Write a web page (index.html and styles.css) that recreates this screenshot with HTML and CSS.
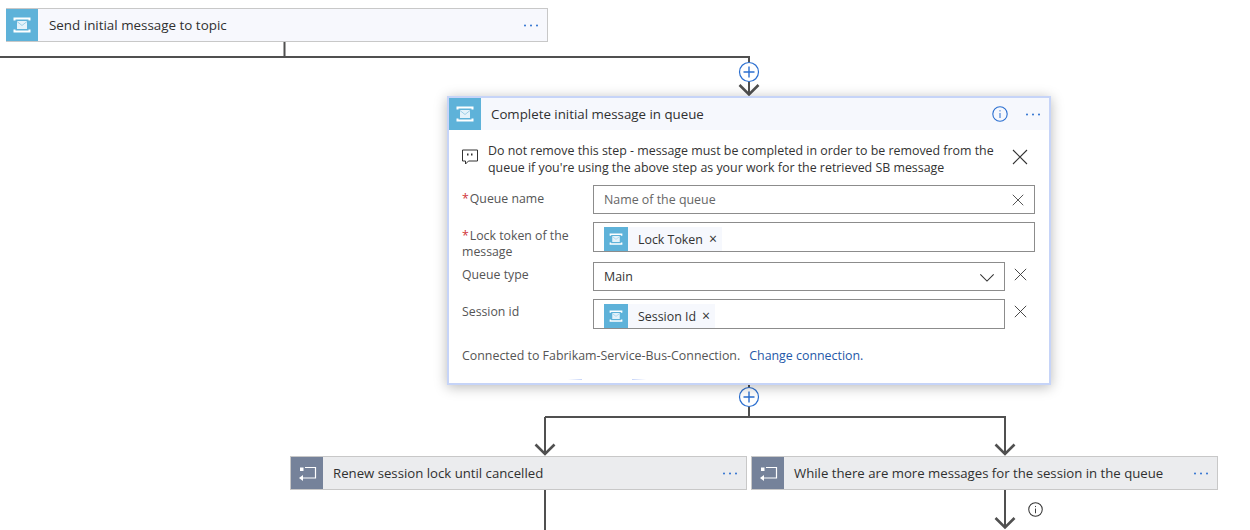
FILE: index.html
```html
<!DOCTYPE html>
<html lang="en">
<head>
<meta charset="utf-8">
<title>Logic app designer</title>
<link rel="stylesheet" href="styles.css">
</head>
<body>
<svg width="0" height="0" class="defs">
  <defs>
    <symbol id="sb" viewBox="0 0 32 32">
      <path d="M8.500 11.500V9.500h15v2M8.500 20.500v2h15v-2" fill="none" stroke="#fff" stroke-width="2"/>
      <rect x="11" y="12" width="10" height="8" fill="#e4f2fa"/>
      <path d="M11 12.500l5 4 5-4" fill="none" stroke="#9fd0e8" stroke-width="1"/>
    </symbol>
    <symbol id="loop" viewBox="0 0 32 32">
      <path d="M14 10.500h10.500v10.500H10" fill="none" stroke="#fff" stroke-width="1.200"/>
      <rect x="9" y="10.500" width="3.500" height="3.500" fill="#fff"/>
      <path d="M12 18v6l-4-3z" fill="#fff"/>
    </symbol>
    <symbol id="x" viewBox="0 0 16 16">
      <path d="M1 1l14 14M15 1L1 15" fill="none" stroke="currentColor" stroke-width="1.100"/>
    </symbol>
    <symbol id="info" viewBox="0 0 16 16">
      <circle cx="8" cy="8" r="7.200" fill="none" stroke="currentColor" stroke-width="1.100"/>
      <rect x="7.500" y="7" width="1" height="5" fill="currentColor"/>
      <rect x="7.500" y="4.200" width="1" height="1.200" fill="currentColor"/>
    </symbol>
    <symbol id="more" viewBox="0 0 14 3">
      <circle cx="1" cy="1.500" r="1"/>
      <circle cx="7" cy="1.500" r="1"/>
      <circle cx="13" cy="1.500" r="1"/>
    </symbol>
  </defs>
</svg>
<main class="canvas">
  <svg class="wires" width="1250" height="530" viewBox="0 0 1250 530">
    <g fill="none" stroke="#505050" stroke-width="2">
      <path d="M284.500 42V57M0 57H749V95"/>
      <path d="M739.500 85L749 94.500l9.500-9.500" stroke-width="2.600"/>
      <path d="M749 385V417M545 417H1005V454M545 417V454"/>
      <path d="M535.500 444.500L545 454l9.500-9.500M995.500 444.500L1005 454l9.500-9.500" stroke-width="2.600"/>
      <path d="M545 490V530M1005 490V527"/>
      <path d="M995.500 518L1005 527.500l9.500-9.500" stroke-width="2.600"/>
    </g>
    <circle cx="749" cy="72" r="9.500" fill="#fff" stroke="#2b6fd0" stroke-width="1.200"/>
    <path d="M749 66.500v11M743.500 72h11" stroke="#2b6fd0" stroke-width="1.400"/>
    <circle cx="749" cy="397" r="9.500" fill="#fff" stroke="#2b6fd0" stroke-width="1.200"/>
    <path d="M749 391.500v11M743.500 397h11" stroke="#2b6fd0" stroke-width="1.400"/>
  </svg>

  <section class="node node-send">
    <div class="node-icon sb"><svg class="i32"><use href="#sb"/></svg></div>
    <div class="node-title">Send initial message to topic</div>
    <svg class="dots"><use href="#more"/></svg>
  </section>

  <section class="node-open">
    <header class="open-head">
      <div class="node-icon sb"><svg class="i32"><use href="#sb"/></svg></div>
      <div class="node-title">Complete initial message in queue</div>
      <svg class="head-info"><use href="#info"/></svg>
      <svg class="dots"><use href="#more"/></svg>
    </header>
    <div class="open-body">
      <div class="note">
        <svg class="note-icon" viewBox="0 0 16 16"><path d="M.5 1h15v11H6.500l-3 3v-3H.5z" fill="none" stroke="#333" stroke-width="1"/><rect x="5" y="4.500" width="1.500" height="2" fill="#333"/><rect x="9" y="4.500" width="1.500" height="2" fill="#333"/></svg>
        <p class="note-text">Do not remove this step - message must be completed in order to be removed from the queue if you're using the above step as your work for the retrieved SB message</p>
        <svg class="note-close"><use href="#x"/></svg>
      </div>
      <div class="row row-name">
        <label class="lbl"><span class="req">*</span>Queue name</label>
        <div class="box box-wide">
          <span class="ph">Name of the queue</span>
          <svg class="box-x"><use href="#x"/></svg>
        </div>
      </div>
      <div class="row row-token">
        <label class="lbl"><span class="req">*</span>Lock token of the message</label>
        <div class="box box-wide box-tok">
          <span class="tok"><span class="tok-icon"><svg class="i24"><use href="#sb"/></svg></span><span class="tok-text">Lock Token</span><span class="tok-x">×</span></span>
        </div>
      </div>
      <div class="row row-type">
        <label class="lbl lbl-tight">Queue type</label>
        <div class="box box-short">
          <span class="val">Main</span>
          <svg class="chev" viewBox="0 0 18 10"><path d="M1.500 1.500L9 9l7.500-7.500" fill="none" stroke="#333" stroke-width="1.200"/></svg>
        </div>
        <svg class="row-x"><use href="#x"/></svg>
      </div>
      <div class="row row-session">
        <label class="lbl lbl-tight">Session id</label>
        <div class="box box-short box-tok">
          <span class="tok"><span class="tok-icon"><svg class="i24"><use href="#sb"/></svg></span><span class="tok-text">Session Id</span><span class="tok-x">×</span></span>
        </div>
        <svg class="row-x"><use href="#x"/></svg>
      </div>
      <p class="conn">Connected to Fabrikam-Service-Bus-Connection.<a class="conn-link">Change connection.</a></p>
    </div>
    <span class="frag frag-a"></span>
    <span class="frag frag-b"></span>
  </section>

  <section class="node node-loop node-renew">
    <div class="node-icon lp"><svg class="i32"><use href="#loop"/></svg></div>
    <div class="node-title">Renew session lock until cancelled</div>
    <svg class="dots"><use href="#more"/></svg>
  </section>

  <section class="node node-loop node-while">
    <div class="node-icon lp"><svg class="i32"><use href="#loop"/></svg></div>
    <div class="node-title">While there are more messages for the session in the queue</div>
    <svg class="dots"><use href="#more"/></svg>
  </section>

  <svg class="edge-info"><use href="#info"/></svg>
</main>
</body>
</html>
```
FILE: styles.css
```css
* { box-sizing: border-box; }
html, body { margin: 0; padding: 0; background: #fff; }
body { font-family: "Open Sans", "Liberation Sans", sans-serif; color: #333; overflow: hidden; }
.defs { position: absolute; }
.canvas { position: relative; width: 1250px; height: 530px; overflow: hidden; }
.wires { position: absolute; left: 0; top: 0; }

.node { position: absolute; display: flex; align-items: center; height: 34px; border: 1px solid #c8c8c8; }
.node-send { left: 6px; top: 8px; width: 542px; background: #f7f8fd; }
.node-loop { background: #ebecee; }
.node-renew { left: 290px; top: 456px; width: 457px; }
.node-while { left: 751px; top: 456px; width: 467px; }
.node-icon { display: flex; align-items: center; justify-content: center; flex: none; height: 32px; width: 32px; }
.sb { background: #5eb2d9; }
.node-send .sb { margin-left: -1px; }
.lp { background: #75829a; }
.i32 { width: 32px; height: 32px; display: block; }
.i24 { width: 24px; height: 24px; display: block; }
.node-title { flex: 1; font-size: 13.300px; line-height: 32px; padding-left: 11px; color: #303030; white-space: nowrap; }
.node-send .node-title { font-size: 13.400px; }
.node-loop .node-title { padding-left: 10px; font-size: 13.200px; }
.dots { width: 14px; height: 3px; flex: none; margin-right: 9px; fill: #2b6fd0; }

.node-open { position: absolute; left: 447px; top: 96px; width: 604px; height: 289px; background: #fff; border: 2px solid #c6d4f8; box-shadow: 0 2px 12px rgba(0,0,0,.28); }
.open-head { display: flex; align-items: center; height: 32px; background: #f6f8fd; }
.open-head .node-title { padding-left: 10px; }
.head-info { width: 16px; height: 16px; color: #2b6fd0; flex: none; margin-right: 18px; }
.open-body { padding: 12px 14px 0 13px; }

.note { display: flex; align-items: flex-start; height: 36px; }
.note-icon { width: 16px; height: 16px; flex: none; margin: 7px 10px 0 0; }
.note-text { margin: 0; font-size: 12.400px; line-height: 17px; width: 516px; color: #333; flex: none; }
.note-close { width: 16px; height: 16px; margin: 7px 0 0 8px; color: #333; flex: none; }

.row { display: flex; align-items: flex-start; }
.row-name { margin-top: 7px; }
.row-token { margin-top: 8px; }
.row-type { margin-top: 2px; }
.row-session { margin-top: 8px; }
.lbl { width: 131px; flex: none; font-size: 12.300px; line-height: 16px; color: #555; padding-top: 6px; padding-right: 5px; }
.lbl-tight { padding-top: 5px; }
.req { color: #d13438; margin-right: 1px; }
.box { border: 1px solid #8c8c8c; height: 29px; display: flex; align-items: center; padding-left: 10px; font-size: 12.400px; background: #fff; }
.box-wide { width: 442px; }
.box-short { width: 412px; }
.box-tok { align-items: flex-end; padding-top: 4px; height: 30px; }
.ph { flex: 1; color: #666; }
.val { flex: 1; color: #333; }
.box-x { width: 12px; height: 12px; margin-right: 10px; color: #333; }
.chev { width: 16px; height: 9px; margin-right: 9px; margin-top: 1px; }
.row-x { width: 13px; height: 13px; margin: 6px 0 0 9px; color: #333; flex: none; }
.tok { display: flex; align-items: center; height: 24px; background: #f6f8fd; }
.tok-icon { width: 24px; height: 24px; background: #5eb2d9; flex: none; }
.tok-text { padding-left: 10px; color: #333; }
.tok-x { padding: 0 5px 0 6px; font-size: 14px; line-height: 14px; }
.conn { margin: 19px 0 0; font-size: 12.400px; line-height: 16px; color: #555; white-space: nowrap; }
.conn-link { margin-left: 9px; color: #2458a8; }
.frag { position: absolute; top: 281px; height: 1px; width: 14px; }
.frag-a { left: 119px; background: linear-gradient(to right, #fff, #c6d4f8); }
.frag-b { left: 183px; background: linear-gradient(to right, #c6d4f8, #fff); }
.edge-info { position: absolute; left: 1028px; top: 502px; width: 15px; height: 15px; color: #333; }
```
